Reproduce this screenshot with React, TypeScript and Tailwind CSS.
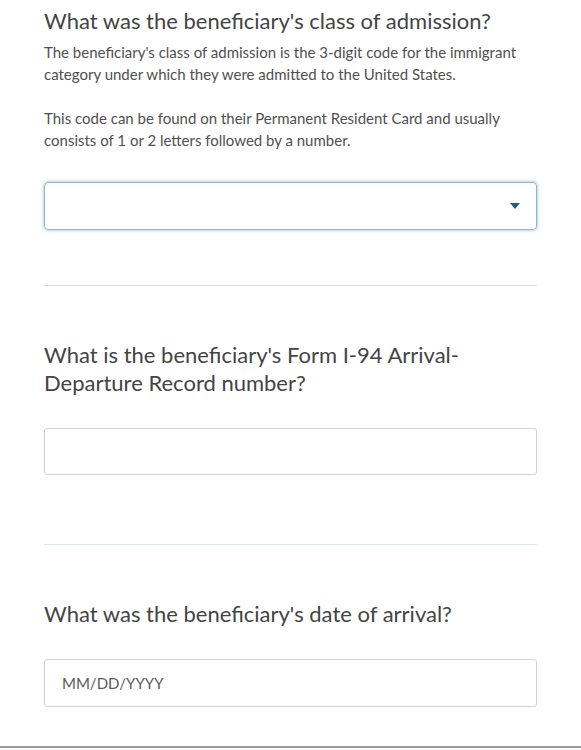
import React from "react";

export default function App() {
  const font = { fontFamily: "Lato, 'Liberation Sans', sans-serif" };
  return (
    <div className="w-[581px] h-[748px] bg-white border-b-2 border-[#9a9a9a]" style={font}>
      <div className="px-[44px] pt-[5px]">
        <h1 className="text-[22px] leading-[32px] text-[#444] font-normal">
          What was the beneficiary's class of admission?
        </h1>
        <p className="mt-[4px] text-[15px] leading-[22px] text-[#505050]">
          The beneficiary's class of admission is the 3-digit code for the immigrant category under
          which they were admitted to the United States.
        </p>
        <p className="mt-[22px] text-[15px] leading-[22px] text-[#505050]">
          This code can be found on their Permanent Resident Card and usually consists of 1 or 2
          letters followed by a number.
        </p>
        <div className="mt-[31px] h-[48px] rounded-[4px] border border-[#8fb5cf] shadow-[0_0_3px_1px_#b6d4ea] flex items-center justify-end pr-[16px]">
          <svg width="10" height="6" viewBox="0 0 10 6">
            <path d="M0 0 L10 0 L5 6 Z" fill="#1f5a8c" />
          </svg>
        </div>
        <div className="mt-[55px] h-px bg-[#c9deef]" />
        <h2 className="mt-[55px] text-[22px] leading-[28px] text-[#444] font-normal">
          What is the beneficiary's Form I-94 Arrival-
          <br />
          Departure Record number?
        </h2>
        <div className="mt-[31px] h-[47px] rounded-[3px] border border-[#d2d2d2]" />
        <div className="mt-[69px] h-px bg-[#d3e7f7]" />
        <h2 className="mt-[55px] text-[22px] leading-[28px] text-[#444] font-normal">
          What was the beneficiary's date of arrival?
        </h2>
        <div className="mt-[31px] h-[48px] rounded-[3px] border border-[#d2d2d2] flex items-center pl-[17px] text-[15px] text-[#5a5a5a]">
          MM/DD/YYYY
        </div>
      </div>
    </div>
  );
}
